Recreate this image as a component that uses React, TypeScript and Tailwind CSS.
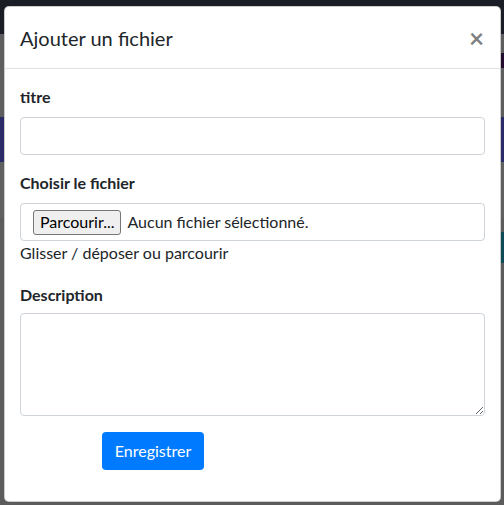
import React, { useState } from 'react'

const App: React.FC = () => {
  const [titre, setTitre] = useState('')
  const [description, setDescription] = useState('')

  return (
    <div className="relative w-[504px] h-[505px] overflow-hidden font-['Lato',sans-serif] text-[#212529]">
      {/* fond assombri derrière la modale */}
      <div className="flex flex-col h-full">
        <div className="h-[34px] bg-[#1b1d26]" />
        <div className="h-[19px] bg-[#5e5e5e]" />
        <div className="h-[15px] bg-[#5e5e5e]" />
        <div className="h-[49px] bg-[#5e5e5e]" />
        <div className="h-[45px] bg-[#2b2a68]" />
        <div className="h-[56px] bg-[#606060]" />
        <div className="h-[14px] bg-[#5c5c5c]" />
        <div className="flex h-[31px]">
          <div className="flex-1 bg-[#5c5c5c]" />
          <div className="w-[4px] bg-[#0d4a55]" />
        </div>
        <div className="flex-1 bg-[#5c5c5c]" />
      </div>
      <div className="absolute right-0 top-[53px] w-[4px] h-[15px] bg-[#230b2e]" />

      <div className="absolute left-[4px] top-[6px] w-[497px] h-[496px] bg-white rounded-[5px] border border-black/20 flex flex-col">
        <div className="flex items-start justify-between px-[15px] pt-[16px] pb-[15px] border-b border-[#dee2e6]">
          <h5 className="text-[20px] leading-[30px] font-normal">Ajouter un fichier</h5>
          <button className="text-[26px] leading-[30px] font-bold text-black/50 pr-[1px]">×</button>
        </div>

        <div className="px-[15px] pt-[16px] flex flex-col">
          <label className="font-bold text-[16px] leading-[24px] mb-[8px]">titre</label>
          <input
            type="text"
            value={titre}
            onChange={(e) => setTitre(e.target.value)}
            className="h-[38px] w-full border border-[#ced4da] rounded-[4px] px-3 outline-none"
          />

          <label className="font-bold text-[16px] leading-[24px] mt-[16px] mb-[8px]">Choisir le fichier</label>
          <div className="h-[38px] w-full border border-[#ced4da] rounded-[4px] flex items-center pl-[12px]">
            <span className="h-[25px] px-[6px] flex items-center border border-[#767676] bg-[#efefef] rounded-[3px] text-[16px] text-black">
              Parcourir...
            </span>
            <span className="ml-[6px] text-[16px] text-[#212529]">Aucun fichier sélectionné.</span>
          </div>
          <span className="text-[16px] leading-[24px]">Glisser / déposer ou parcourir</span>

          <label className="font-bold text-[16px] leading-[24px] mt-[18px] mb-[6px]">Description</label>
          <textarea
            value={description}
            onChange={(e) => setDescription(e.target.value)}
            className="h-[103px] w-full border border-[#ced4da] rounded-[4px] px-3 outline-none"
          />

          <div className="mt-[16px] pl-[82px]">
            <button className="h-[38px] w-[102px] bg-[#007bff] text-white text-[16px] rounded-[4px]">
              Enregistrer
            </button>
          </div>
        </div>
      </div>
    </div>
  )
}

export default App
